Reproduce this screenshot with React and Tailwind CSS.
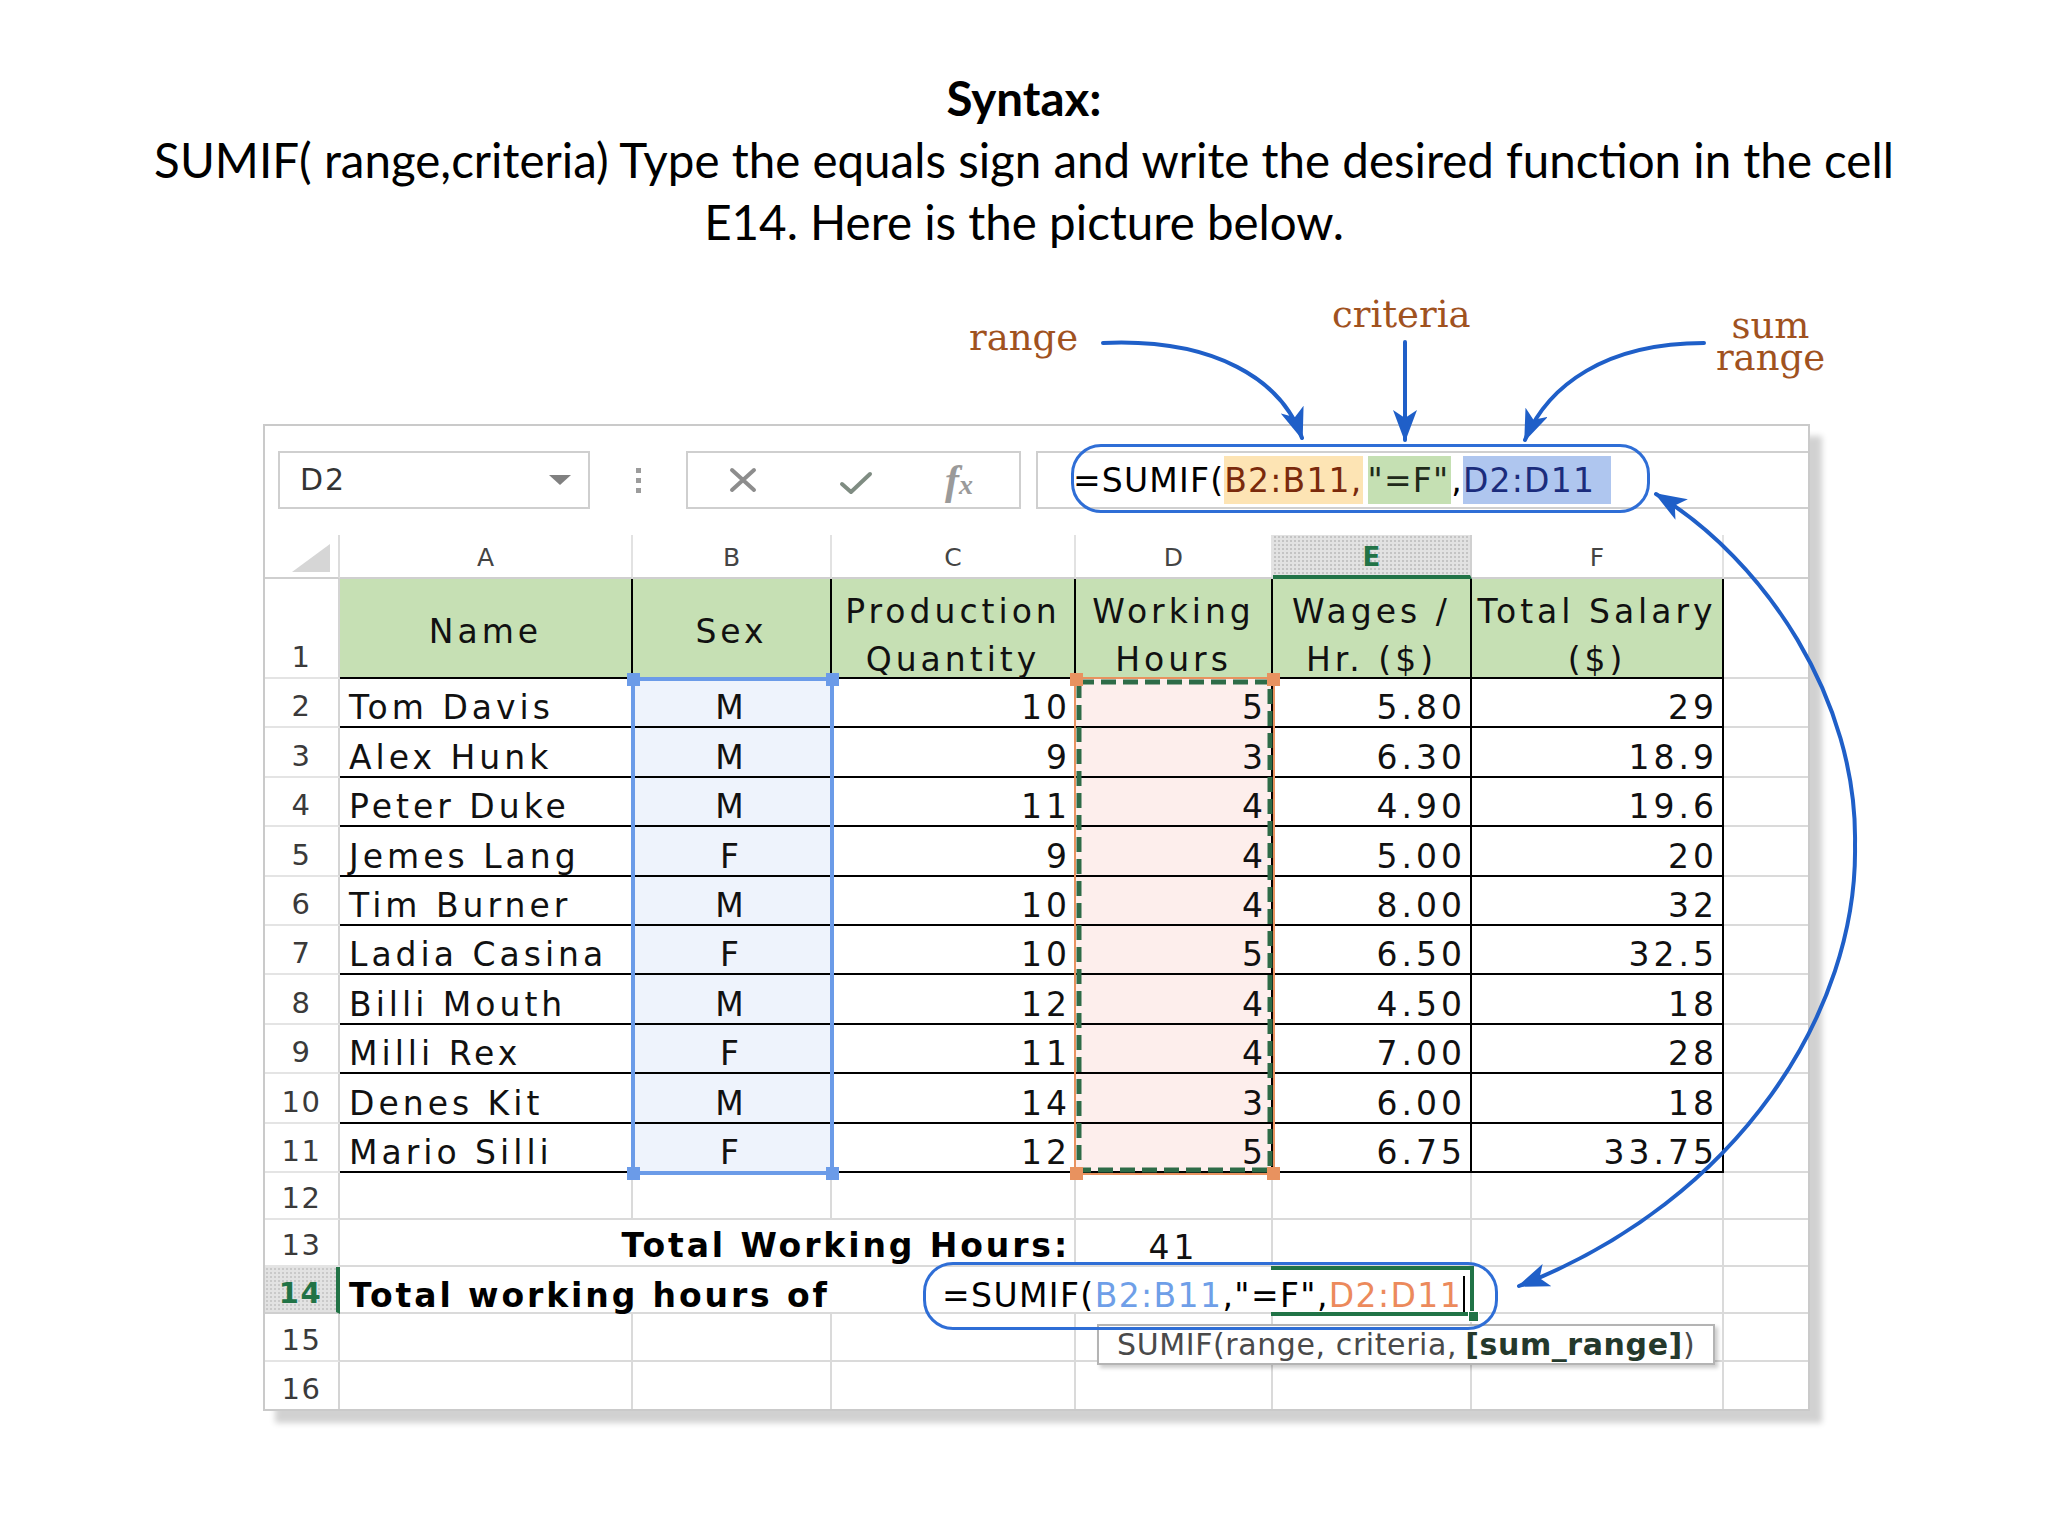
import React from "react";

const W = ["w-[293px]", "w-[199px]", "w-[244px]", "w-[197px]", "w-[199px]", "w-[252px]", "w-[84px]"];
const CF = "font-['DejaVu_Sans',sans-serif] text-[33px] tracking-[4px] text-[#111]";
const NUMF = "font-['DejaVu_Sans',sans-serif] text-[29px] tracking-[1.5px] leading-none";

const DATA = [
  ["Tom Davis", "M", "10", "5", "5.80", "29"],
  ["Alex Hunk", "M", "9", "3", "6.30", "18.9"],
  ["Peter Duke", "M", "11", "4", "4.90", "19.6"],
  ["Jemes Lang", "F", "9", "4", "5.00", "20"],
  ["Tim Burner", "M", "10", "4", "8.00", "32"],
  ["Ladia Casina", "F", "10", "5", "6.50", "32.5"],
  ["Billi Mouth", "M", "12", "4", "4.50", "18"],
  ["Milli Rex", "F", "11", "4", "7.00", "28"],
  ["Denes Kit", "M", "14", "3", "6.00", "18"],
  ["Mario Silli", "F", "12", "5", "6.75", "33.75"],
];

function RowNum({ n, active, last }) {
  if (active) {
    return (
      <div className={`w-[75px] shrink-0 flex items-end justify-center pb-[4px] border-r-4 border-r-[#217346] border-b-2 border-b-[#cfcfcf] bg-[#e2e2e2] bg-[radial-gradient(#c9c9c9_1px,transparent_1px)] bg-[length:4px_4px] font-bold text-[#217346] ${NUMF}`}>
        {n}
      </div>
    );
  }
  return (
    <div className={`w-[75px] shrink-0 flex items-end justify-center pb-[5px] border-r-2 border-r-[#d4d4d4] ${last ? "" : "border-b-2 border-b-[#e4e4e4]"} bg-white text-[#3a3a3a] ${NUMF}`}>
      {n}
    </div>
  );
}

function DataRow({ n, r }) {
  const base = `shrink-0 flex items-end pb-[2px] border-r-2 border-b-2 border-black leading-none ${CF}`;
  return (
    <div className="flex h-[49.4px]">
      <RowNum n={n} />
      <div className={`${W[0]} ${base} justify-start pl-[9px]`}>{r[0]}</div>
      <div className={`${W[1]} ${base} justify-center bg-[#eef3fc]`}>{r[1]}</div>
      <div className={`${W[2]} ${base} justify-end pr-[3px]`}>{r[2]}</div>
      <div className={`${W[3]} ${base} justify-end pr-[4px] bg-[#fdeeec]`}>{r[3]}</div>
      <div className={`${W[4]} ${base} justify-end pr-[4px]`}>{r[4]}</div>
      <div className={`${W[5]} ${base} justify-end pr-[4px]`}>{r[5]}</div>
      <div className={`${W[6]} shrink-0 border-b-2 border-[#dadada]`} />
    </div>
  );
}

function EmptyCells({ from, last }) {
  return W.slice(from).map((w, i) => (
    <div
      key={i}
      className={`${w} shrink-0 ${from + i < 6 ? "border-r-2" : ""} ${last ? "" : "border-b-2"} border-[#dadada]`}
    />
  ));
}

function Header() {
  const base = `shrink-0 flex bg-[#c6e0b4] border-r-2 border-b-2 border-black justify-center text-center ${CF}`;
  const one = `${base} items-center pt-[6px] leading-none`;
  const two = `${base} items-center pt-[16px] leading-[48px] whitespace-nowrap`;
  return (
    <div className="flex h-[100px]">
      <RowNum n="1" />
      <div className={`${W[0]} ${one}`}>Name</div>
      <div className={`${W[1]} ${one}`}>Sex</div>
      <div className={`${W[2]} ${two} tracking-[3.3px]`}>
        <div>Production<br />Quantity</div>
      </div>
      <div className={`${W[3]} ${two} tracking-[3.3px]`}>
        <div>Working<br />Hours</div>
      </div>
      <div className={`${W[4]} ${two} tracking-[3.3px]`}>
        <div>Wages /<br />Hr. ($)</div>
      </div>
      <div className={`${W[5]} ${two} tracking-[3px]`}>
        <div>Total Salary<br />($)</div>
      </div>
      <div className={`${W[6]} shrink-0 border-b-2 border-[#dadada]`} />
    </div>
  );
}

function ColHeaders() {
  const letters = ["A", "B", "C", "D", "E", "F", ""];
  return (
    <div className="flex h-[44px]">
      <div className="w-[75px] shrink-0 border-r-2 border-r-[#dcdcdc] border-b-2 border-b-[#cfcfcf] flex items-end justify-end pr-[8px] pb-[5px]">
        <svg width="38" height="28" viewBox="0 0 38 28">
          <polygon points="38,0 38,28 0,28" fill="#d6d6d6" />
        </svg>
      </div>
      {letters.map((l, i) =>
        l === "E" ? (
          <div
            key={i}
            className={`${W[i]} shrink-0 flex items-center justify-center border-r-2 border-r-[#d0d0d0] border-b-4 border-b-[#217346] bg-[#e2e2e2] bg-[radial-gradient(#c4c4c4_1px,transparent_1px)] bg-[length:4px_4px] font-['DejaVu_Sans',sans-serif] text-[26px] font-bold text-[#217346] pt-[4px]`}
          >
            {l}
          </div>
        ) : (
          <div
            key={i}
            className={`${W[i]} shrink-0 flex items-center justify-center ${i < 6 ? "border-r-2 border-r-[#e2e2e2]" : ""} border-b-2 border-b-[#cfcfcf] font-['DejaVu_Sans',sans-serif] text-[25px] text-[#444] pt-[4px]`}
          >
            {l}
          </div>
        )
      )}
    </div>
  );
}

function FormulaBar() {
  return (
    <div className="flex h-[58px] mt-[25px]">
      <div className="ml-[13px] w-[312px] shrink-0 border-2 border-[#cfcfcf] flex items-center justify-between pl-[20px] pr-[17px]">
        <span className="font-['DejaVu_Sans',sans-serif] text-[30px] tracking-[2px] leading-none text-[#333]">D2</span>
        <svg width="22" height="11" viewBox="0 0 22 11">
          <path d="M0 0 H22 L11 10 Z" fill="#808080" />
        </svg>
      </div>
      <div className="w-[96px] shrink-0 flex flex-col items-center justify-center gap-[5px]">
        <div className="w-[5px] h-[5px] bg-[#9c9c9c]" />
        <div className="w-[5px] h-[5px] bg-[#9c9c9c]" />
        <div className="w-[5px] h-[5px] bg-[#9c9c9c]" />
      </div>
      <div className="w-[335px] shrink-0 border-2 border-[#cfcfcf] flex items-center pl-[41px]">
        <svg width="28" height="26" viewBox="0 0 28 26">
          <path d="M3 3 L25 23 M25 3 L3 23" stroke="#8d8d8d" strokeWidth="4" strokeLinecap="round" />
        </svg>
        <svg width="34" height="26" viewBox="0 0 34 26" className="ml-[82px] mt-[6px]">
          <path d="M3 14 L12 22 L31 4" stroke="#7f8c82" strokeWidth="4" fill="none" strokeLinecap="round" strokeLinejoin="round" />
        </svg>
        <span className="ml-[72px] font-['Liberation_Serif',serif] italic font-bold text-[42px] leading-none text-[#9a9a9a]">
          f<span className="text-[28px]">x</span>
        </span>
      </div>
      <div className="ml-[15px] flex-1 border-2 border-r-0 border-[#cfcfcf] flex items-center pl-[35px] font-['DejaVu_Sans',sans-serif] text-[33px] tracking-[1.2px] leading-none">
        <span className="text-black">=SUMIF(</span>
        <span className="bg-[#fde4b4] text-[#7a2a0c] py-[7.5px]">B2:B11,</span>
        <span className="bg-[#c5e0b3] text-[#1f2a1a] py-[7.5px] ml-[5px] pr-[2px]">"=F"</span>
        <span className="text-black">,</span>
        <span className="bg-[#afc6ef] text-[#1b2c7c] py-[7.5px] pr-[16px]">D2:D11</span>
      </div>
    </div>
  );
}

function Sheet() {
  return (
    <div className="w-[1547px] border-2 border-[#cacaca] bg-white shadow-[12px_12px_6px_rgba(0,0,0,0.18)]">
      <FormulaBar />
      <div className="mt-[26px]">
        <ColHeaders />
        <Header />
        {DATA.map((r, i) => (
          <DataRow key={i} n={i + 2} r={r} />
        ))}
        <div className="flex h-[47.2px]">
          <RowNum n="12" />
          <EmptyCells from={0} />
        </div>
        <div className="flex h-[47.2px]">
          <RowNum n="13" />
          <div className="w-[736px] shrink-0 flex items-end justify-end pb-[3px] pr-[4px] border-r-2 border-b-2 border-[#dadada] font-['DejaVu_Sans',sans-serif] text-[33px] font-bold tracking-[2.9px] leading-none text-black">
            Total Working Hours:
          </div>
          <div className={`${W[3]} shrink-0 flex items-end justify-center pb-[1px] border-r-2 border-b-2 border-[#dadada] leading-none ${CF}`}>41</div>
          <EmptyCells from={4} />
        </div>
        <div className="flex h-[47.2px]">
          <RowNum n="14" active />
          <div className="w-[1132px] shrink-0 flex items-end pb-[0px] border-r-2 border-b-2 border-[#dadada] font-['DejaVu_Sans',sans-serif] text-[33px] leading-none">
            <span className="w-[602px] shrink-0 pl-[9px] font-bold tracking-[2.9px] text-black whitespace-nowrap">Total working hours of</span>
            <span className="tracking-[1.4px] text-black whitespace-nowrap">
              =SUMIF(<span className="text-[#6f9fe8]">B2:B11</span>,"=F",<span className="text-[#ec8a5c]">D2:D11</span>
            </span>
          </div>
          <EmptyCells from={5} />
        </div>
        <div className="flex h-[47.2px]">
          <RowNum n="15" />
          <EmptyCells from={0} />
        </div>
        <div className="flex h-[47.2px]">
          <RowNum n="16" last />
          <EmptyCells from={0} last />
        </div>
      </div>
    </div>
  );
}

function Handle({ cls }) {
  return <div className={`absolute w-[13px] h-[13px] ${cls}`} />;
}

export default function App() {
  const label = "absolute font-['DejaVu_Serif',serif] text-[37px] text-[#a0521f]";
  return (
    <div className="relative w-[2048px] h-[1536px] bg-white overflow-hidden">
      <div className="pt-[67px] text-center font-['Lato',sans-serif] text-[47.5px] leading-[62px] text-black">
        <div className="font-bold">Syntax:</div>
        <div>SUMIF( range,criteria) Type the equals sign and write the desired function in the cell</div>
        <div>E14. Here is the picture below.</div>
      </div>
      <div className="pl-[263px] mt-[171px]">
        <Sheet />
      </div>

      {/* selection B2:B11 */}
      <div className="absolute left-[631px] top-[677px] w-[203px] h-[498px] border-4 border-[#6b9be8] pointer-events-none" />
      <Handle cls="left-[627px] top-[673px] bg-[#6b9be8]" />
      <Handle cls="left-[826px] top-[673px] bg-[#6b9be8]" />
      <Handle cls="left-[627px] top-[1167px] bg-[#6b9be8]" />
      <Handle cls="left-[826px] top-[1167px] bg-[#6b9be8]" />

      {/* selection D2:D11 */}
      <div className="absolute left-[1074px] top-[677px] w-[201px] h-[498px] border-2 border-[#e8925f] pointer-events-none">
        <svg width="197" height="494" viewBox="0 0 197 494" className="block">
          <rect x="3" y="3" width="191" height="488" fill="none" stroke="#2e6b47" strokeWidth="5" strokeDasharray="15 7" />
        </svg>
      </div>
      <Handle cls="left-[1070px] top-[673px] bg-[#e8925f]" />
      <Handle cls="left-[1267px] top-[673px] bg-[#e8925f]" />
      <Handle cls="left-[1070px] top-[1167px] bg-[#e8925f]" />
      <Handle cls="left-[1267px] top-[1167px] bg-[#e8925f]" />

      {/* active cell E14 */}
      <div className="absolute left-[1271px] top-[1266px] w-[203px] h-[50px] border-t-4 border-b-4 border-r-4 border-[#217346]" />
      <div className="absolute left-[1468px] top-[1311px] w-[11px] h-[11px] bg-[#217346] border border-white" />
      <div className="absolute left-[1463px] top-[1276px] w-[2px] h-[36px] bg-black" />

      {/* tooltip */}
      <div className="absolute left-[1097px] top-[1324px] w-[618px] h-[41px] bg-white border-2 border-[#b4b4b4] shadow-[3px_3px_4px_rgba(0,0,0,0.2)] flex items-center pl-[18px] font-['DejaVu_Sans',sans-serif] text-[30px] tracking-[0.6px] leading-none text-[#4a4a4a] whitespace-nowrap">
        SUMIF(range, criteria, <span className="font-bold text-[#24392c] ml-[8px]">[sum_range]</span>)
      </div>

      {/* callouts */}
      <div className="absolute left-[1071px] top-[444px] w-[579px] h-[69px] border-[3.5px] border-[#2f6ed6] rounded-[30px] pointer-events-none" />
      <div className="absolute left-[923px] top-[1262px] w-[575px] h-[68px] border-[3.5px] border-[#2f6ed6] rounded-[30px] pointer-events-none" />

      {/* labels */}
      <div className={`${label} leading-none left-[969px] top-[319px]`}>range</div>
      <div className={`${label} leading-none left-[1332px] top-[296px]`}>criteria</div>
      <div className={`${label} leading-[29px] left-[1715px] top-[311px] w-[111px] text-center`}>sum</div>
      <div className={`${label} leading-[30px] left-[1715px] top-[343px] w-[111px] text-center`}>range</div>

      <svg className="absolute left-0 top-0 pointer-events-none" width="2048" height="1536" viewBox="0 0 2048 1536">
        <defs>
          <marker id="ah" markerWidth="32" markerHeight="24" refX="30" refY="12" orient="auto-start-reverse" markerUnits="userSpaceOnUse">
            <path d="M0 0 L32 12 L0 24 L8 12 Z" fill="#1f5fc8" />
          </marker>
        </defs>
        <g stroke="#1f5fc8" strokeWidth="4" fill="none" strokeLinecap="round">
          <path d="M1103 343 C1215 338 1282 380 1302 438" markerEnd="url(#ah)" />
          <path d="M1405 342 L1405 440" markerEnd="url(#ah)" />
          <path d="M1704 343 C1606 343 1548 385 1525 440" markerEnd="url(#ah)" />
          <path d="M1656 494 C1765 560 1858 700 1855 845 C1858 1010 1740 1200 1519 1286" markerStart="url(#ah)" markerEnd="url(#ah)" />
        </g>
      </svg>
    </div>
  );
}
